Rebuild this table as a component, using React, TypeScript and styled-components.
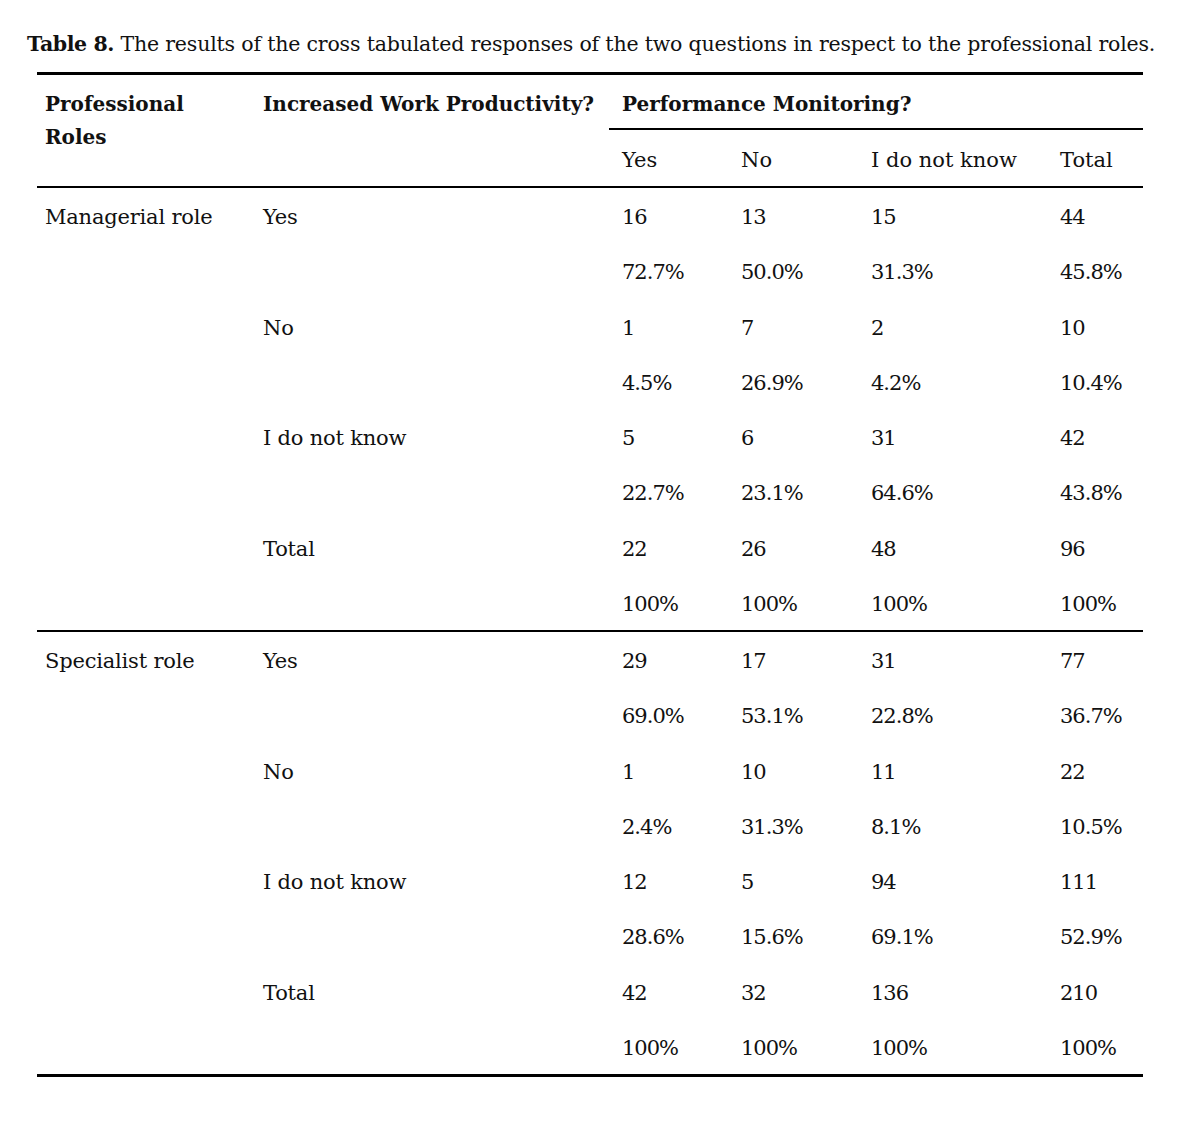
import React from "react";
import styled, { createGlobalStyle, css } from "styled-components";

const GlobalStyle = createGlobalStyle`
  html, body { margin: 0; padding: 0; background: #fff; }
  body { font-family: "DejaVu Serif", "Liberation Serif", serif; color: #111; }
`;

const Page = styled.div`
  padding: 27.5px 0 40px 27px;
  width: 1185px;
  box-sizing: border-box;
`;

const Caption = styled.p`
  margin: 0 0 11px 0;
  font-size: 20.5px;
  line-height: 33px;
  letter-spacing: -0.18px;
  white-space: nowrap;
`;

const CaptionLabel = styled.strong`
  font-weight: 700;
  letter-spacing: -0.4px;
`;

const Table = styled.table`
  margin-left: 10px;
  width: 1106px;
  table-layout: fixed;
  border-collapse: separate;
  border-spacing: 0;
  border-top: 3px solid #000;
  border-bottom: 3px solid #000;
  font-size: 21px;
  line-height: 33px;
`;

const cellBase = css<{ $num?: boolean }>`
  text-align: left;
  vertical-align: top;
  white-space: nowrap;
  padding: 13px 0 9.25px ${(p) => (p.$num ? "13px" : "8px")};
`;

const HeadCell = styled.th<{ $num?: boolean; $rule?: boolean }>`
  ${cellBase};
  font-weight: 700;
  font-size: 20px;
  padding-bottom: 7.5px;
  ${(p) =>
    p.$rule &&
    css`
      border-bottom: 2px solid #000;
    `}
`;

const SubHeadCell = styled.th<{ $num?: boolean }>`
  ${cellBase};
  font-weight: 400;
  padding-top: 14px;
  padding-bottom: 9px;
  border-bottom: 2px solid #000;
`;

const Row = styled.tr<{ $divider?: boolean }>`
  ${(p) =>
    p.$divider &&
    css`
      & > td {
        border-top: 2px solid #000;
      }
    `}
`;

const Cell = styled.td<{ $num?: boolean }>`
  ${cellBase};
  letter-spacing: ${(p) => (p.$num ? "-1px" : "-0.2px")};
`;

type Group = { label: string; counts: string[]; pcts: string[] };
type Section = { role: string; groups: Group[] };

const sections: Section[] = [
  {
    role: "Managerial role",
    groups: [
      { label: "Yes", counts: ["16", "13", "15", "44"], pcts: ["72.7%", "50.0%", "31.3%", "45.8%"] },
      { label: "No", counts: ["1", "7", "2", "10"], pcts: ["4.5%", "26.9%", "4.2%", "10.4%"] },
      { label: "I do not know", counts: ["5", "6", "31", "42"], pcts: ["22.7%", "23.1%", "64.6%", "43.8%"] },
      { label: "Total", counts: ["22", "26", "48", "96"], pcts: ["100%", "100%", "100%", "100%"] },
    ],
  },
  {
    role: "Specialist role",
    groups: [
      { label: "Yes", counts: ["29", "17", "31", "77"], pcts: ["69.0%", "53.1%", "22.8%", "36.7%"] },
      { label: "No", counts: ["1", "10", "11", "22"], pcts: ["2.4%", "31.3%", "8.1%", "10.5%"] },
      { label: "I do not know", counts: ["12", "5", "94", "111"], pcts: ["28.6%", "15.6%", "69.1%", "52.9%"] },
      { label: "Total", counts: ["42", "32", "136", "210"], pcts: ["100%", "100%", "100%", "100%"] },
    ],
  },
];

const colWidths = [218, 354, 119, 130, 189, 96];

export default function App() {
  return (
    <Page>
      <GlobalStyle />
      <Caption>
        <CaptionLabel>Table 8.</CaptionLabel> The results of the cross tabulated responses of the two questions in
        respect to the professional roles.
      </Caption>
      <Table>
        <colgroup>
          {colWidths.map((w, i) => (
            <col key={i} style={{ width: w }} />
          ))}
        </colgroup>
        <thead>
          <tr>
            <HeadCell rowSpan={2} $rule>
              Professional
              <br />
              Roles
            </HeadCell>
            <HeadCell rowSpan={2} $rule>
              Increased Work Productivity?
            </HeadCell>
            <HeadCell colSpan={4} $num $rule>
              Performance Monitoring?
            </HeadCell>
          </tr>
          <tr>
            <SubHeadCell $num>Yes</SubHeadCell>
            <SubHeadCell $num>No</SubHeadCell>
            <SubHeadCell $num>I do not know</SubHeadCell>
            <SubHeadCell $num>Total</SubHeadCell>
          </tr>
        </thead>
        {sections.map((s, si) => (
          <tbody key={s.role}>
            {s.groups.map((g, gi) => (
              <React.Fragment key={g.label}>
                <Row $divider={si > 0 && gi === 0}>
                  <Cell>{gi === 0 ? s.role : ""}</Cell>
                  <Cell>{g.label}</Cell>
                  {g.counts.map((c, ci) => (
                    <Cell key={ci} $num>
                      {c}
                    </Cell>
                  ))}
                </Row>
                <Row>
                  <Cell />
                  <Cell />
                  {g.pcts.map((c, ci) => (
                    <Cell key={ci} $num>
                      {c}
                    </Cell>
                  ))}
                </Row>
              </React.Fragment>
            ))}
          </tbody>
        ))}
      </Table>
    </Page>
  );
}
